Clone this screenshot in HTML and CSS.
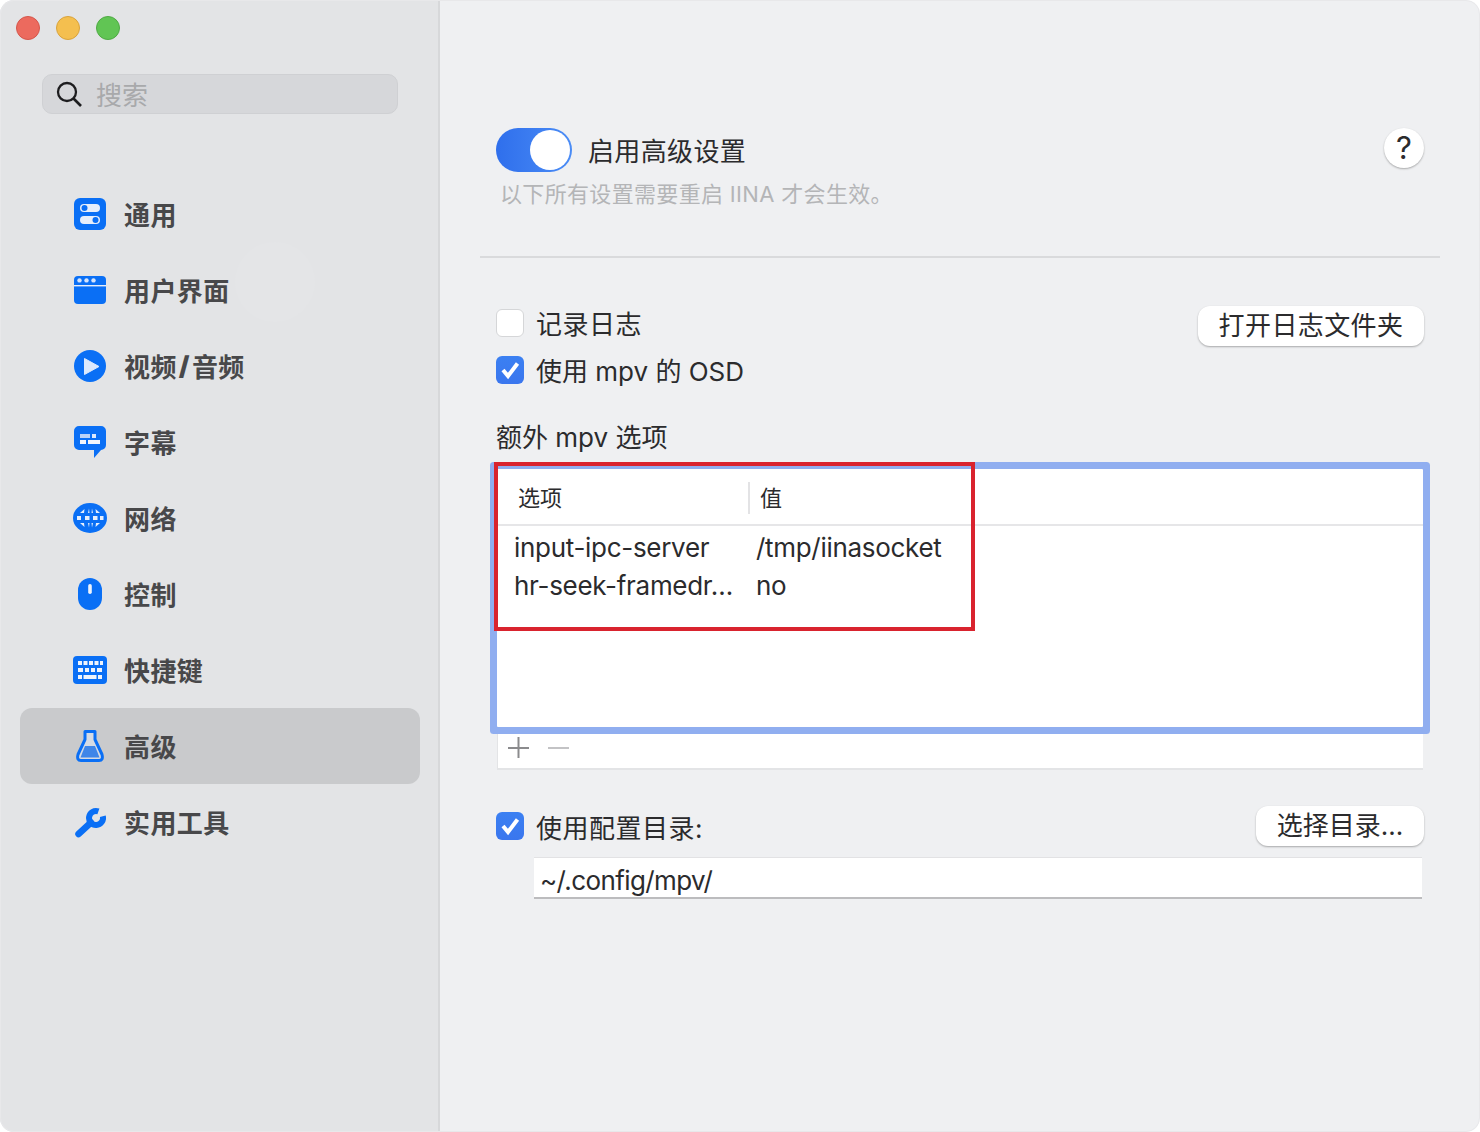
FILE: index.html
```html
<!DOCTYPE html>
<html lang="zh-CN">
<head>
  <meta charset="UTF-8">
  <title>IINA 偏好设置</title>
  <link rel="stylesheet" href="styles.css">
</head>
<body>

  <div class="window">
    <aside class="sidebar">
      <div class="traffic">
        <span class="light light-red"></span>
        <span class="light light-yellow"></span>
        <span class="light light-green"></span>
      </div>

      <div class="search">
        <svg class="search-icon" width="26" height="26" viewBox="0 0 26 26">
          <circle cx="11" cy="11" r="9" fill="none" stroke="#1d1d1f" stroke-width="2.3"/>
          <path d="M17.5 17.5L25 25" fill="none" stroke="#1d1d1f" stroke-width="2.6"/>
        </svg>
        <span class="search-text">搜索</span>
      </div>

      <span class="ghost"></span>

      <nav class="nav">
        <a class="nav-item">
          <span class="nav-icon">
            <svg width="32" height="32" viewBox="0 0 32 32">
              <rect width="32" height="32" rx="6" fill="#0a6ff5"/>
              <rect x="6" y="6" width="20" height="8" rx="4" fill="#e6eefb"/>
              <rect x="6" y="18" width="20" height="8" rx="4" fill="#e6eefb"/>
              <circle cx="10.5" cy="10" r="3" fill="#0a6ff5"/>
              <circle cx="21.5" cy="22" r="3" fill="#0a6ff5"/>
            </svg>
          </span>
          通用
        </a>
        <a class="nav-item">
          <span class="nav-icon">
            <svg width="32" height="28" viewBox="0 0 32 28">
              <rect width="32" height="28" rx="4" fill="#0a6ff5"/>
              <rect y="9" width="32" height="1.4" fill="#e6eefb"/>
              <circle cx="5.5" cy="4.4" r="2.2" fill="#d6e4fb"/>
              <circle cx="12.5" cy="4.4" r="2.2" fill="#d6e4fb"/>
              <circle cx="19.5" cy="4.4" r="2.2" fill="#d6e4fb"/>
            </svg>
          </span>
          用户界面
        </a>
        <a class="nav-item">
          <span class="nav-icon">
            <svg width="32" height="32" viewBox="0 0 32 32">
              <circle cx="16" cy="16" r="16" fill="#0a6ff5"/>
              <path d="M10.5 8.5L25 16.5L10.5 24.5Z" fill="#dce9fd" stroke="#dce9fd" stroke-width="1" stroke-linejoin="round"/>
            </svg>
          </span>
          视频<b class="slash">/</b>音频
        </a>
        <a class="nav-item">
          <span class="nav-icon">
            <svg width="32" height="32" viewBox="0 0 32 32">
              <path d="M5 0H27A5 5 0 0 1 32 5V19A5 5 0 0 1 27 24H27L20 32V24H5A5 5 0 0 1 0 19V5A5 5 0 0 1 5 0Z" fill="#0a6ff5"/>
              <rect x="6" y="8" width="10" height="4" fill="#b9d2f8"/>
              <rect x="18" y="8" width="4" height="4" fill="#dce9fd"/>
              <rect x="6" y="14" width="6" height="4" fill="#f0f5fd"/>
              <rect x="14" y="14" width="12" height="4" fill="#f0f5fd"/>
            </svg>
          </span>
          字幕
        </a>
        <a class="nav-item">
          <span class="nav-icon">
            <svg width="34" height="30" viewBox="0 0 34 30">
              <ellipse cx="17" cy="15" rx="17" ry="15" fill="#0a6ff5"/>
              <g fill="#e6eefb">
                <rect x="4" y="13" width="4" height="4"/>
                <rect x="12" y="13" width="4.500" height="4"/>
                <rect x="20" y="13" width="4.500" height="4"/>
                <rect x="27" y="13" width="3.500" height="4"/>
                <path d="M7 10L11.500 6L11 10Z"/>
                <path d="M15 10L16 5.500L16.500 10Z"/>
                <path d="M20 10L19 5.500L18.500 10Z"/>
                <path d="M27 10L22.500 6L23 10Z"/>
                <path d="M7 20L11.500 24L11 20Z"/>
                <path d="M15 20L16 24.500L16.500 20Z"/>
                <path d="M20 20L19 24.500L18.500 20Z"/>
                <path d="M27 20L22.500 24L23 20Z"/>
              </g>
            </svg>
          </span>
          网络
        </a>
        <a class="nav-item">
          <span class="nav-icon">
            <svg width="24" height="32" viewBox="0 0 24 32">
              <rect width="24" height="32" rx="12" fill="#0a6ff5"/>
              <rect x="10.2" y="6" width="3.6" height="10" rx="1.8" fill="#eef3fc"/>
            </svg>
          </span>
          控制
        </a>
        <a class="nav-item">
          <span class="nav-icon">
            <svg width="34" height="28" viewBox="0 0 34 28">
              <rect width="34" height="28" rx="4" fill="#0a6ff5"/>
              <g fill="#eef3fc">
                <rect x="5" y="5" width="4" height="4"/>
                <rect x="10.5" y="5" width="4" height="4"/>
                <rect x="16" y="5" width="4" height="4"/>
                <rect x="21.5" y="5" width="4" height="4"/>
                <rect x="27" y="5" width="3" height="4"/>
                <rect x="5" y="12" width="5" height="4"/>
                <rect x="12" y="12" width="4" height="4"/>
                <rect x="18" y="12" width="4" height="4"/>
                <rect x="24" y="12" width="5" height="4"/>
                <rect x="5" y="19" width="4" height="4"/>
                <rect x="10.5" y="19" width="13" height="4"/>
                <rect x="25" y="19" width="4" height="4"/>
              </g>
            </svg>
          </span>
          快捷键
        </a>
        <a class="nav-item nav-item-active">
          <span class="nav-icon">
            <svg width="28" height="32" viewBox="0 0 28 32">
              <path d="M9 1.5H19V9.5L26 24.5Q27.5 30.5 23 30.5H5Q0.5 30.5 2 24.5L9 9.5Z" fill="#d5dbe4" stroke="#0a6ff5" stroke-width="3" stroke-linejoin="round"/>
              <path d="M9 16H19L23.500 27.500H4.500Z" fill="#3f86e8"/>
            </svg>
          </span>
          高级
        </a>
        <a class="nav-item">
          <span class="nav-icon">
            <svg width="32" height="32" viewBox="0 0 32 32">
              <path d="M4.500 28L17 16.500" fill="none" stroke="#0a6ff5" stroke-width="6.500" stroke-linecap="round"/>
              <path d="M24.400 5.400A7 7 0 1 0 28.800 10.200" fill="none" stroke="#0a6ff5" stroke-width="6"/>
            </svg>
          </span>
          实用工具
        </a>
      </nav>
    </aside>

    <main class="content">
      <div class="enable-row">
        <span class="toggle"><span class="toggle-knob"></span></span>
        <span class="enable-label">启用高级设置</span>
        <span class="help">?</span>
      </div>
      <p class="hint">以下所有设置需要重启 IINA 才会生效。</p>
      <hr class="divider">

      <div class="check-row">
        <span class="checkbox"></span>
        <span class="label label-cjk">记录日志</span>
        <span class="btn btn-log">打开日志文件夹</span>
      </div>
      <div class="check-row check-row-osd">
        <span class="checkbox checkbox-on">
          <svg width="28" height="28" viewBox="0 0 28 28"><path d="M7 14L12 20L21.500 7.500" fill="none" stroke="#fff" stroke-width="4"/></svg>
        </span>
        <span class="label">使用 mpv 的 OSD</span>
      </div>

      <h2 class="section-title">额外 mpv 选项</h2>

      <div class="table-wrap">
        <div class="table">
          <div class="table-head">
            <span class="head-cell head-cell-key">选项</span>
            <span class="head-cell">值</span>
          </div>
          <div class="table-row"><span>input-ipc-server</span><span>/tmp/iinasocket</span></div>
          <div class="table-row"><span>hr-seek-framedr…</span><span>no</span></div>
        </div>
        <div class="table-foot">
          <svg width="62" height="22" viewBox="0 0 62 22">
            <path d="M0 11H21M10.500 0V21" fill="none" stroke="#8b8b8d" stroke-width="2"/>
            <path d="M40 11H61" fill="none" stroke="#c3c3c5" stroke-width="2"/>
          </svg>
        </div>
        <span class="callout"></span>
      </div>

      <div class="check-row check-row-dir">
        <span class="checkbox checkbox-on">
          <svg width="28" height="28" viewBox="0 0 28 28"><path d="M7 14L12 20L21.500 7.500" fill="none" stroke="#fff" stroke-width="4"/></svg>
        </span>
        <span class="label label-cjk label-dir">使用配置目录:</span>
        <span class="btn btn-dir">选择目录...</span>
      </div>
      <div class="path-field">~/.config/mpv/</div>
    </main>
  </div>

</body>
</html>
```

FILE: styles.css
```css
* { box-sizing: border-box; }

body {
  margin: 0;
  background-color: #fff;
  color: #2b2b2d;
  font-family: Inter, "Noto Sans CJK SC", sans-serif;
  font-size: 26px;
}

.window {
  position: relative;
  display: flex;
  width: 1480px;
  height: 1132px;
  overflow: hidden;
  border-radius: 14px;
  background-color: #eff0f2;
}

/* thin edge round the whole window */
.window::after {
  content: "";
  position: absolute;
  inset: 0;
  z-index: 3;
  border: 1px solid #e8e8ea;
  border-radius: 14px;
  pointer-events: none;
}

/* sidebar */
.sidebar {
  position: relative;
  flex: none;
  width: 440px;
  padding: 16px 18px 0 20px;
  background-color: #e3e4e6;
  border-right: 2px solid #d7d8da;
}

.traffic {
  display: flex;
  gap: 16px;
  margin-left: -4px;
}

.light {
  width: 24px;
  height: 24px;
  border-radius: 50%;
}

.light-red { background-color: #ec6a5e; border: 1px solid #d5564b; }
.light-yellow { background-color: #f4bf4f; border: 1px solid #d9a33c; }
.light-green { background-color: #61c554; border: 1px solid #4faa44; }

.search {
  display: flex;
  align-items: center;
  width: 356px;
  height: 40px;
  margin: 34px 0 0 22px;
  padding-left: 13px;
  background-color: #d6d7da;
  border: 1px solid #cfd0d3;
  border-radius: 10px;
}

.search-icon { flex: none; }

.search-text {
  margin-left: 14px;
  padding-top: 3px;
  color: #a8a9ab;
  line-height: 38px;
}

.ghost {
  position: absolute;
  left: 235px;
  top: 242px;
  width: 80px;
  height: 80px;
  border-radius: 50%;
  background-color: #e4e5e7;
}

.nav {
  position: relative;
  margin-top: 62px;
}

.nav-item {
  display: flex;
  align-items: center;
  height: 76px;
  padding: 0 0 2px 52px;
  border-radius: 12px;
  color: #48484a;
  font-weight: 700;
  letter-spacing: 0.4px;
}

.nav-item-active {
  background-color: #c9cacc;
}

.nav-icon {
  display: flex;
  flex: none;
  align-items: center;
  justify-content: center;
  width: 36px;
  height: 36px;
  margin: 2px 16px 0 0;
}

.slash {
  margin: 0 2px;
}

/* main pane */
.content {
  flex: 1;
  padding: 128px 56px 0;
}

.enable-row {
  display: flex;
  align-items: flex-start;
  height: 44px;
}

.toggle {
  position: relative;
  flex: none;
  width: 76px;
  height: 44px;
  border-radius: 22px;
  background: linear-gradient(90deg, #2f6fec, #4a8cf6);
}

.toggle-knob {
  position: absolute;
  top: 2px;
  right: 2px;
  width: 40px;
  height: 40px;
  border-radius: 50%;
  background-color: #fff;
}

.enable-label {
  margin-left: 16px;
  letter-spacing: 0.35px;
  line-height: 48px;
}

.help {
  flex: none;
  width: 40px;
  height: 40px;
  margin-left: auto;
  border-radius: 50%;
  background-color: #fff;
  box-shadow: 0 1px 2px rgba(0, 0, 0, 0.3);
  font-size: 31px;
  line-height: 40px;
  text-align: center;
}

.hint {
  margin: 6px 0 0 4px;
  color: #b4b5b7;
  font-size: 22px;
  letter-spacing: 0.33px;
  line-height: 32px;
}

.divider {
  height: 2px;
  margin: 46px -16px 0;
  border: none;
  background-color: #d9dadc;
}

.check-row {
  display: flex;
  align-items: center;
  height: 40px;
  margin-top: 48px;
}

.check-row-osd {
  margin-top: 7px;
}

.check-row-dir {
  margin-top: 36px;
}

.checkbox {
  flex: none;
  width: 28px;
  height: 28px;
  margin: 0 12px 6px 0;
  border-radius: 6px;
  background-color: #fff;
  border: 1px solid #d5d6d8;
}

.checkbox svg { display: block; }

.checkbox-on {
  background: linear-gradient(180deg, #3b80f2, #3a76ee);
  border: none;
}

.check-row-dir .checkbox {
  margin-bottom: 0;
}

.label {
  padding-bottom: 2px;
  line-height: 40px;
}

.label-cjk {
  letter-spacing: 0.5px;
}

.label-dir {
  padding: 6px 0 0;
}

.btn {
  height: 40px;
  margin-left: auto;
  border-radius: 12px;
  background-color: #fff;
  box-shadow: 0 1px 2px rgba(0, 0, 0, 0.3);
  line-height: 40px;
  text-align: center;
}

.btn-log {
  width: 226px;
  letter-spacing: 0.4px;
}

.btn-dir { width: 168px; }

.section-title {
  margin: 25px 0 0;
  font-size: 26px;
  font-weight: 400;
  line-height: 40px;
}

/* options table */
.table-wrap {
  position: relative;
  margin-top: 11px;
  padding: 0 1px;
}

.table {
  position: relative;
  z-index: 1;
  height: 258px;
  background-color: #fff;
  border-radius: 1px;
  box-shadow: 0 0 0 7px #90aef0;
}

.table-head {
  display: flex;
  align-items: center;
  height: 57px;
  padding-bottom: 2px;
  border-bottom: 2px solid #e6e6e8;
  font-size: 22px;
}

.head-cell-key {
  position: relative;
  width: 253px;
}

.head-cell-key::after {
  content: "";
  position: absolute;
  top: 2px;
  right: 0;
  width: 2px;
  height: 32px;
  background-color: #e3e3e5;
}

.head-cell {
  padding-left: 10px;
}

.head-cell-key.head-cell {
  padding-left: 21px;
}

.table-row {
  display: grid;
  grid-template-columns: 242px 1fr;
  height: 38px;
  padding-left: 17px;
  letter-spacing: -0.3px;
  line-height: 44px;
  white-space: nowrap;
}

.table-row:first-of-type { margin-top: 2px; }

.table-foot {
  display: flex;
  align-items: center;
  height: 43px;
  padding: 1px 0 0 10px;
  background-color: #fff;
  border-left: 1px solid #e3e4e6;
  border-bottom: 2px solid #e3e4e6;
}

.table-foot svg { display: block; }

.callout {
  position: absolute;
  z-index: 2;
  left: -2px;
  top: -7px;
  width: 481px;
  height: 169px;
  border: 4px solid #d9232e;
}

.path-field {
  width: 888px;
  height: 42px;
  margin: 11px 0 0 38px;
  padding-left: 6px;
  background-color: #fff;
  border-top: 1px solid #e2e2e4;
  border-bottom: 2px solid #bcbcbe;
  letter-spacing: -0.6px;
  line-height: 46px;
}
```
